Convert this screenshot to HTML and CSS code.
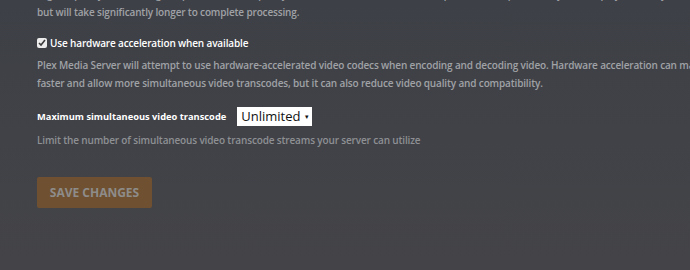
FILE: index.html
```html
<html lang="en">
<head>
    <meta charset="UTF-8">
    <title>Transcoder Settings</title>
    <link rel="stylesheet" href="styles.css">
</head>
<body>
    <div class="settings">

        <p class="help clipped">Higher quality transcoding will produce better quality video at the same bitrate, but requires a more powerful system to play smoothly,<br>
        but will take significantly longer to complete processing.</p>

        <div class="field first">
            <label class="check">
                <input type="checkbox" checked>
                <span>Use hardware acceleration when available</span>
            </label>
            <p class="help">Plex Media Server will attempt to use hardware-accelerated video codecs when encoding and decoding video. Hardware acceleration can make it<br>
            faster and allow more simultaneous video transcodes, but it can also reduce video quality and compatibility.</p>
        </div>

        <div class="field">
            <div class="row">
                <label class="name">Maximum simultaneous video transcode</label>
                <div class="select">Unlimited <span class="arrow">&#9662;</span></div>
            </div>
            <p class="help">Limit the number of simultaneous video transcode streams your server can utilize</p>
        </div>

        <button class="save">SAVE CHANGES</button>

    </div>
</body>
</html>
```

FILE: styles.css
```css
* {
    font-family: "Open Sans", sans-serif;
}

html, body {
    margin: 0;
    height: 100%;
    overflow: hidden;
}

body {
    background: #3f4247;
    background: linear-gradient(to bottom, #3d4046, #444448);
}

.settings {
    padding: 0 0 0 37px;
    width: 760px;
}

.help {
    margin: 0;
    font-size: 10px;
    font-weight: 600;
    letter-spacing: -0.15px;
    line-height: 18px;
    color: #a0a2a6;
    white-space: nowrap;
}

.clipped {
    margin-top: -15px;
}

.field {
    margin-top: 15px;
}

.field.first {
    margin-top: 13px;
}

.check {
    display: flex;
    align-items: center;
    color: #fff;
    font-size: 10px;
    font-weight: 600;
    letter-spacing: -0.15px;
    height: 18px;
}

.check input {
    margin: 0 3px 0 0;
    width: 10px;
    height: 10px;
    accent-color: #ececec;
}

.check + .help {
    margin-top: 4px;
}

.row {
    display: flex;
    align-items: center;
}

.name {
    color: #fff;
    font-size: 9.3px;
    font-weight: 700;
    margin-right: 11px;
}

.select {
    background: #fff;
    color: #111;
    font-size: 13px;
    height: 19px;
    line-height: 19px;
    padding: 0 3px 0 4px;
}

.arrow {
    font-size: 7px;
    vertical-align: 2px;
    margin-left: 1px;
}

.row + .help {
    margin-top: 5px;
    color: #8e9094;
}

.save {
    margin-top: 28px;
    width: 115px;
    height: 31px;
    background: #6f5131;
    color: #8e8c8a;
    border: none;
    border-radius: 2px;
    font-size: 12px;
    font-weight: 700;
    padding: 0;
}
```
